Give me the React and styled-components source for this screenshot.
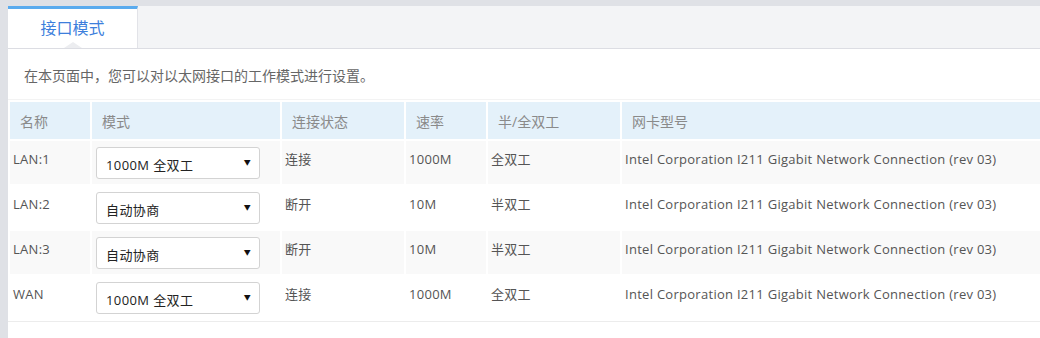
import React from "react";
import styled, { createGlobalStyle } from "styled-components";

const GlobalStyle = createGlobalStyle`
  html, body {
    margin: 0;
    padding: 0;
    background: #dfe1e6;
    font-family: "Open Sans", "Noto Sans CJK SC", sans-serif;
    overflow: hidden;
  }
`;

const Page = styled.div`
  padding: 6px 0 0 8px;
  height: 338px;
  box-sizing: border-box;
`;

const Panel = styled.div`
  background: #fff;
  height: 100%;
`;

const TabBar = styled.div`
  display: flex;
  background: #f3f4f6;
  border-bottom: 1px solid #dcdde3;
  height: 42px;
`;

const Tab = styled.div`
  position: relative;
  width: 130px;
  box-sizing: border-box;
  border-top: 3px solid #5aabee;
  border-right: 1px solid #e2e3e8;
  background: ${(p) => (p.active ? "#fff" : "transparent")};
  color: #3d7fdc;
  font-size: 16px;
  display: flex;
  align-items: center;
  justify-content: center;
  padding-bottom: 3px;

  &::after {
    content: "";
    position: absolute;
    left: 56px;
    bottom: 0;
    border-left: 9px solid transparent;
    border-right: 9px solid transparent;
    border-bottom: 6px solid #ecedf0;
  }
`;

const Intro = styled.p`
  margin: 0;
  height: 51px;
  box-sizing: border-box;
  padding: 16px 0 0 16px;
  font-size: 14px;
  color: #666;
  border-bottom: 1px solid #f3f3f3;
`;

const Table = styled.table`
  border-collapse: separate;
  border-spacing: 2px;
  table-layout: fixed;
  width: 1040px;
  border-bottom: 1px solid #ececec;
`;

const Th = styled.th`
  width: ${(p) => p.w || "auto"};
  height: 37px;
  padding: 0 0 0 10px;
  background: #e4f1fa;
  color: #8a8a8a;
  font-size: 14px;
  font-weight: normal;
  text-align: left;
`;

const Row = styled.tr`
  background: ${(p) => (p.odd ? "#f9f9f9" : "#fff")};
`;

const Td = styled.td`
  height: 43px;
  box-sizing: border-box;
  padding: ${(p) => (p.select ? "0 0 0 4px" : "9px 0 0 3px")};
  vertical-align: ${(p) => (p.select ? "middle" : "top")};
  color: #555;
  font-size: 13px;
  line-height: 18px;
  letter-spacing: 0.28px;
  white-space: nowrap;
`;

const SelectWrap = styled.div`
  position: relative;
  width: 164px;

  &::after {
    content: "▼";
    position: absolute;
    right: 9px;
    top: 11px;
    font-size: 7px;
    line-height: 9px;
    color: #111;
    pointer-events: none;
  }
`;

const Select = styled.select`
  appearance: none;
  width: 164px;
  height: 32px;
  box-sizing: border-box;
  border: 1px solid #d3d3d3;
  border-radius: 3px;
  background: #fff;
  padding: 4px 0 0 9px;
  font-family: inherit;
  font-size: 13px;
  letter-spacing: 0.4px;
  color: #222;
  outline: none;
`;

const modes = ["自动协商", "10M 半双工", "10M 全双工", "100M 半双工", "100M 全双工", "1000M 全双工"];

const ports = [
  { name: "LAN:1", mode: "1000M 全双工", state: "连接", speed: "1000M", duplex: "全双工" },
  { name: "LAN:2", mode: "自动协商", state: "断开", speed: "10M", duplex: "半双工" },
  { name: "LAN:3", mode: "自动协商", state: "断开", speed: "10M", duplex: "半双工" },
  { name: "WAN", mode: "1000M 全双工", state: "连接", speed: "1000M", duplex: "全双工" },
];

const nic = "Intel Corporation I211 Gigabit Network Connection (rev 03)";

export default function App() {
  return (
    <>
      <GlobalStyle />
      <Page>
        <Panel>
          <TabBar>
            <Tab active>接口模式</Tab>
          </TabBar>
          <Intro>在本页面中，您可以对以太网接口的工作模式进行设置。</Intro>
          <Table>
            <thead>
              <tr>
                <Th w="70px">名称</Th>
                <Th w="178px">模式</Th>
                <Th w="112px">连接状态</Th>
                <Th w="70px">速率</Th>
                <Th w="122px">半/全双工</Th>
                <Th>网卡型号</Th>
              </tr>
            </thead>
            <tbody>
              {ports.map((p, i) => (
                <Row key={p.name} odd={i % 2 === 0}>
                  <Td>{p.name}</Td>
                  <Td select>
                    <SelectWrap>
                      <Select defaultValue={p.mode}>
                        {modes.map((m) => (
                          <option key={m}>{m}</option>
                        ))}
                      </Select>
                    </SelectWrap>
                  </Td>
                  <Td>{p.state}</Td>
                  <Td>{p.speed}</Td>
                  <Td>{p.duplex}</Td>
                  <Td>{nic}</Td>
                </Row>
              ))}
            </tbody>
          </Table>
        </Panel>
      </Page>
    </>
  );
}
